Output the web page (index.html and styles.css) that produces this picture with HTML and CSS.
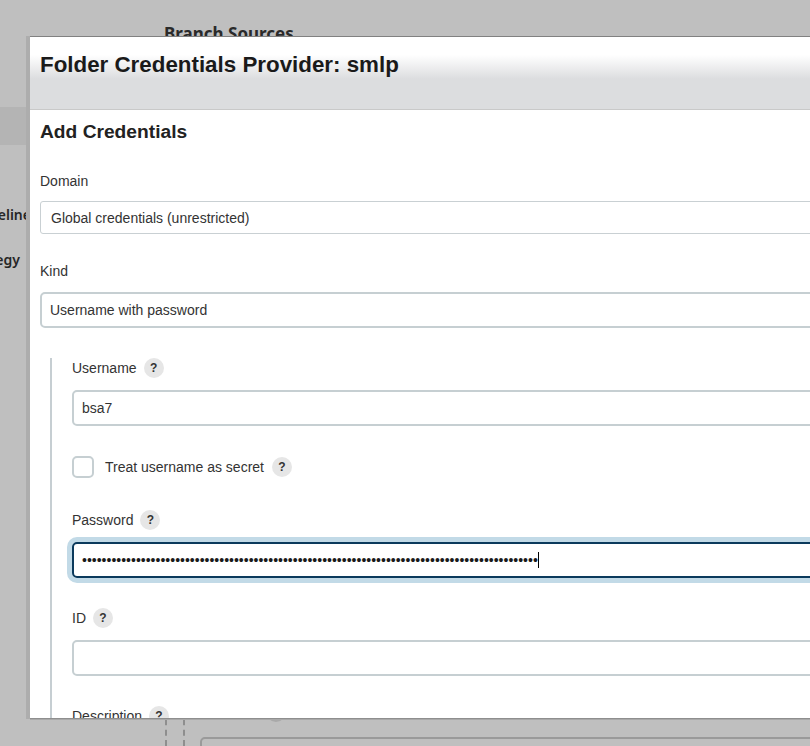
FILE: index.html
```html
<!DOCTYPE html>
<html lang="en">
<head>
<meta charset="utf-8">
<title>Folder Credentials Provider: smlp</title>
<link rel="stylesheet" href="styles.css">
</head>
<body>
<div class="page">
  <div class="page-head">
    <h2 class="section-title">Branch Sources</h2>
  </div>
  <div class="page-body">
    <nav class="side">
      <div class="side-band"></div>
      <div class="side-item side-item-first"><span>Multibranch Pipeline</span></div>
      <div class="side-item side-item-second"><span>Orphaned Item Strategy</span></div>
    </nav>
    <div class="main">
      <div class="rail rail-one"></div>
      <div class="rail rail-two"></div>
      <div class="bg-field">
        <div class="bg-label"><span>Strategy</span><span class="bg-help"></span></div>
        <div class="bg-input"></div>
      </div>
    </div>
  </div>
</div>

<div class="dialog">
  <div class="dialog-header">
    <h1 class="dialog-title">Folder Credentials Provider: smlp</h1>
  </div>
  <div class="dialog-body">
    <h2 class="form-title">Add Credentials</h2>

    <div class="group group-domain">
      <div class="field-label">Domain</div>
      <div class="select select-old">Global credentials (unrestricted)</div>
    </div>

    <div class="group group-kind">
      <div class="field-label">Kind</div>
      <div class="select select-new">Username with password</div>
    </div>

    <div class="section">
      <div class="group">
        <div class="field-label">Username<span class="help">?</span></div>
        <div class="input">bsa7</div>
      </div>

      <div class="check-row">
        <span class="checkbox"></span>
        <span class="check-label">Treat username as secret</span>
        <span class="help">?</span>
      </div>

      <div class="group group-password">
        <div class="field-label">Password<span class="help">?</span></div>
        <div class="input input-focused"><span class="dots">•••••••••••••••••••••••••••••••••••••••••••••••••••••••••••••••••••••••••••••••••••••••••••••</span><span class="caret"></span></div>
      </div>

      <div class="group group-next">
        <div class="field-label">ID<span class="help">?</span></div>
        <div class="input"></div>
      </div>

      <div class="group group-next">
        <div class="field-label">Description<span class="help">?</span></div>
        <div class="input input-tall"></div>
      </div>
    </div>
  </div>
</div>
</body>
</html>
```

FILE: styles.css
```css
html, body {
  margin: 0;
  padding: 0;
  overflow: hidden;
}

body {
  position: relative;
  width: 810px;
  height: 746px;
  background: #bfbfbf;
  font-family: "Liberation Sans", Arial, sans-serif;
  font-size: 14px;
  color: #333;
}

/* ---------- dimmed page behind the dialog ---------- */
.page {
  height: 746px;
}

.page-head {
  height: 107px;
  box-sizing: border-box;
  padding: 23px 0 0 164px;
}

.section-title {
  margin: 0;
  font: 700 17px/22px "Noto Sans", sans-serif;
  color: #2a2a2a;
}

.page-body {
  display: flex;
}

.side {
  width: 150px;
  flex: none;
}

.side-band {
  height: 38px;
  background: #b4b4b4;
}

.side-item {
  display: flex;
  justify-content: flex-end;
  width: 20px;
  white-space: nowrap;
  font: 600 14px/20px "Noto Sans", sans-serif;
  color: #262626;
}

.side-item-first {
  width: 31px;
  margin-top: 60px;
}

.side-item-second {
  margin-top: 25px;
}

.main {
  flex: 1;
  display: flex;
  padding-top: 560px;
}

.rail {
  width: 0;
  height: 100px;
  border-left: 2px dashed #8e8e8e;
}

.rail-one {
  margin-left: 15px;
}

.rail-two {
  margin-left: 16px;
}

.bg-field {
  margin-left: 15px;
  padding-top: 35px;
  width: 700px;
}

.bg-label {
  display: flex;
  align-items: center;
  height: 20px;
  font: 600 14px/20px "Noto Sans", sans-serif;
  color: #262626;
}

.bg-help {
  width: 20px;
  height: 20px;
  margin-left: 8px;
  border-radius: 50%;
  background: #a9a9a9;
}

.bg-input {
  margin-top: 15px;
  height: 36px;
  border: 2px solid #9a9a9a;
  border-radius: 5px;
}

/* ---------- dialog ---------- */
.dialog {
  position: absolute;
  left: 30px;
  top: 36px;
  width: 1000px;
  height: 681px;
  overflow: hidden;
  background: #fff;
  border-top: 1px solid #818181;
  border-bottom: 1px solid #8e8e8e;
  box-shadow: -4px 0 0 #adadad, 0 1px 0 #a9a9a9;
}

.dialog-header {
  height: 73px;
  box-sizing: border-box;
  padding: 15px 10px 0;
  border-bottom: 1px solid #c9c9c9;
  background: linear-gradient(to bottom, #ffffff 0, #ffffff 18px, #dcdddf 42px, #dcdddf 100%);
}

.dialog-title {
  margin: 0;
  font: 700 22.35px/26px "Liberation Sans", Arial, sans-serif;
  color: #1a1a1a;
}

.dialog-body {
  padding: 10px 10px 0;
}

.form-title {
  margin: 0;
  font: 700 19.2px/24px "Liberation Sans", Arial, sans-serif;
  color: #222;
}

.field-label {
  display: flex;
  align-items: center;
  height: 20px;
  line-height: 20px;
}

.help {
  display: inline-flex;
  align-items: center;
  justify-content: center;
  width: 20px;
  height: 20px;
  margin-left: 7px;
  border-radius: 50%;
  background: #e6e6e6;
  color: #333;
  font: 700 12px/1 "Liberation Sans", Arial, sans-serif;
}

.group-domain {
  margin-top: 27px;
}

.group-kind {
  margin-top: 27px;
}

.select {
  display: flex;
  align-items: center;
  box-sizing: border-box;
  white-space: nowrap;
}

.select-old {
  margin-top: 10px;
  height: 33px;
  padding-left: 10px;
  border: 1px solid #c9d0d3;
  border-radius: 3px;
}

.select-new {
  margin-top: 11px;
  height: 36px;
  padding-left: 8px;
  border: 2px solid #c6cfd2;
  border-radius: 5px;
}

.section {
  margin-top: 30px;
  margin-left: 10px;
  padding-left: 20px;
  padding-bottom: 40px;
  border-left: 2px solid #c6ced2;
}

.input {
  display: flex;
  align-items: center;
  box-sizing: border-box;
  margin-top: 12px;
  height: 36px;
  padding-left: 8px;
  border: 2px solid #c6cfd2;
  border-radius: 5px;
  white-space: nowrap;
}

.input-focused {
  border-color: #0b3a5c;
  box-shadow: 0 0 0 5px #c2dae7;
}

.input-tall {
  height: 60px;
}

.dots {
  font-size: 14px;
  color: #1a1a1a;
}

.caret {
  width: 1px;
  height: 16px;
  background: #000;
}

.check-row {
  display: flex;
  align-items: center;
  margin-top: 30px;
  height: 22px;
}

.checkbox {
  width: 22px;
  height: 22px;
  box-sizing: border-box;
  border: 2px solid #c6cfd2;
  border-radius: 5px;
  background: #fff;
}

.check-label {
  margin-left: 11px;
}

.check-row .help {
  margin-left: 8px;
}

.group-password {
  margin-top: 32px;
}

.group-next {
  margin-top: 30px;
}
```
